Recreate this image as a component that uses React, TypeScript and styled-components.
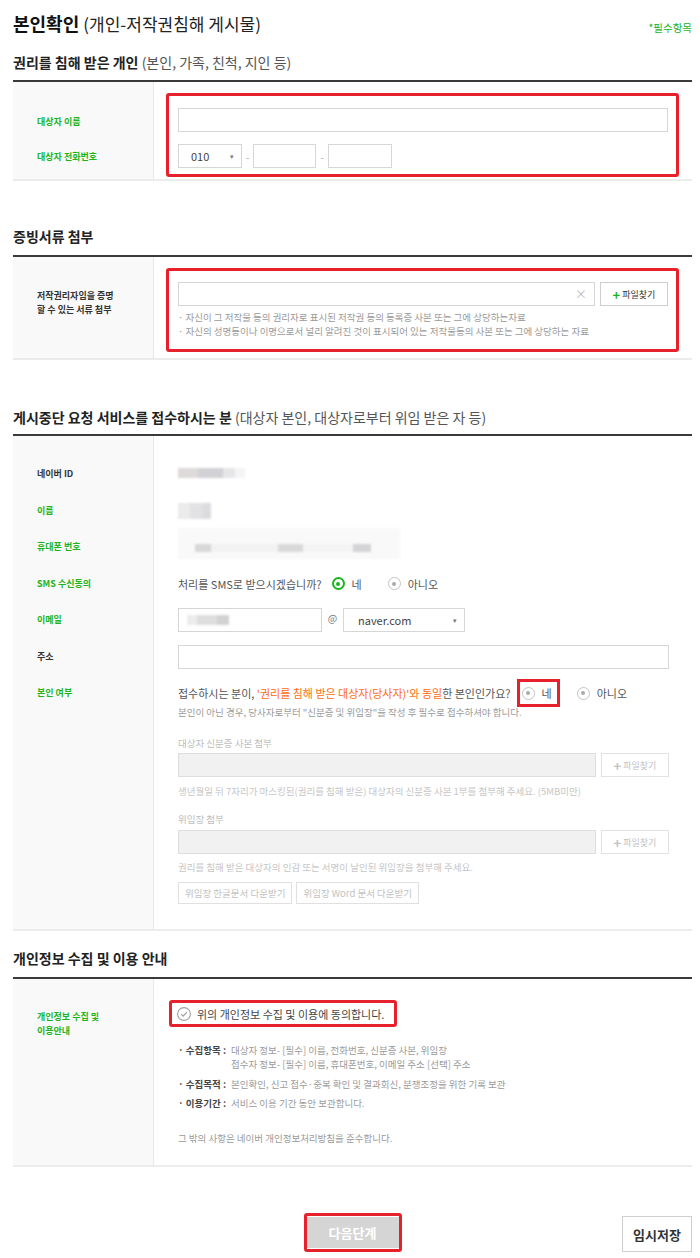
import React from "react";
import styled, { createGlobalStyle } from "styled-components";

const GREEN = "#1db41d";
const RED = "#e8202b";

const GlobalStyle = createGlobalStyle`
  html, body { margin: 0; padding: 0; background: #fff; }
  body {
    font-family: "Noto Sans CJK KR", "Noto Sans", sans-serif;
    color: #333;
  }
  * { box-sizing: border-box; }
`;

const App = () => {
  return (
    <Page>
      <GlobalStyle />
      <TitleRow>
        <Title>
          본인확인 <span>(개인-저작권침해 게시물)</span>
        </Title>
        <Required>*필수항목</Required>
      </TitleRow>

      {/* 권리를 침해 받은 개인 */}
      <Heading $mt={19} $mb={9}>
        권리를 침해 받은 개인 <span>(본인, 가족, 친척, 지인 등)</span>
      </Heading>
      <Table $pt={0} $pb={2}>
        <Row>
          <LabelStack>
            <Label $green>대상자 이름</Label>
            <Label $green>대상자 전화번호</Label>
          </LabelStack>
          <Highlight $pad="12px 8px 6px 9px">
            <InputBox />
            <PhoneRow>
              <Select $w={64}>
                010 <Arrow>▾</Arrow>
              </Select>
              <Dash>-</Dash>
              <InputBox $w={63} />
              <Dash>-</Dash>
              <InputBox $w={64} />
            </PhoneRow>
          </Highlight>
        </Row>
      </Table>

      {/* 증빙서류 첨부 */}
      <Heading $mt={46} $mb={10}>
        증빙서류 첨부
      </Heading>
      <Table $pt={0} $pb={6}>
        <Row>
          <Label $lh={14} $top={32}>
            저작권리자임을 증명
            <br />할 수 있는 서류 첨부
          </Label>
          <Highlight $pad="11px 8px 11px 9px">
            <FileRow>
              <InputBox $grow>
                <Clear>×</Clear>
              </InputBox>
              <FileBtn>
                <b>+</b>파일찾기
              </FileBtn>
            </FileRow>
            <Note $mt={4}>· 자신이 그 저작물 등의 권리자로 표시된 저작권 등의 등록증 사본 또는 그에 상당하는자료</Note>
            <Note>· 자신의 성명등이나 이명으로서 널리 알려진 것이 표시되어 있는 저작물등의 사본 또는 그에 상당하는 자료</Note>
          </Highlight>
        </Row>
      </Table>

      {/* 게시중단 요청 서비스를 접수하시는 분 */}
      <Heading $mt={48} $mb={8}>
        게시중단 요청 서비스를 접수하시는 분 <span>(대상자 본인, 대상자로부터 위임 받은 자 등)</span>
      </Heading>
      <Table $pt={26} $pb={25}>
        <Row $gap>
          <Label>네이버 ID</Label>
          <Field>
            <Blur
              $w={67}
              $h={23}
              $bg="linear-gradient(#fff 0 6px, transparent 6px 16px, #fff 16px), linear-gradient(90deg, #dedada 0 20px, #d2d2d6 20px 45px, #e6e6e9 45px 57px, #f4f4f4 57px)"
            />
          </Field>
        </Row>
        <Row $gap>
          <Label $green>이름</Label>
          <Field>
            <Blur
              $w={33}
              $h={16}
              $mt={4}
              $bg="linear-gradient(90deg, #ebebeb 0 12px, #e2e2e4 12px 25px, #dcdce0 25px)"
            />
          </Field>
        </Row>
        <Row $gap>
          <Label $green>휴대폰 번호</Label>
          <Field>
            <Blur
              $w={222}
              $h={31}
              $mt={-7}
              $bg="linear-gradient(#f9f9f9 0 16px, transparent 16px 24px, #f9f9f9 24px), linear-gradient(90deg, #f9f9f9 0 17px, #d8d8d8 17px 33px, #f2f2f2 33px 100px, #d9d9d9 100px 125px, #f4f4f4 125px 175px, #d4d4d7 175px 193px, #f9f9f9 193px)"
            />
          </Field>
        </Row>
        <Row $gap>
          <Label $green>SMS 수신동의</Label>
          <Field>
            <Line>
              처리를 SMS로 받으시겠습니까?
              <Option $ml={10}>
                <Radio $on />네
              </Option>
              <Option $ml={26}>
                <Radio />
                아니오
              </Option>
            </Line>
          </Field>
        </Row>
        <Row $gap>
          <Label $green>이메일</Label>
          <Field>
            <EmailRow>
              <InputBox $w={144}>
                <Blur
                  $w={42}
                  $h={10}
                  $ml={8}
                  $bg="linear-gradient(90deg, #ececec 0 10px, #dedede 10px 30px, #d2d2d4 30px)"
                />
              </InputBox>
              <At>@</At>
              <Select $w={122} $pl={14}>
                naver.com <Arrow>▾</Arrow>
              </Select>
            </EmailRow>
          </Field>
        </Row>
        <Row $gap>
          <Label>주소</Label>
          <Field>
            <InputBox />
          </Field>
        </Row>
        <Row $gap>
          <Label $green>본인 여부</Label>
          <Field>
            <Line>
              접수하시는 분이,&nbsp;<Orange>'권리를 침해 받은 대상자(당사자)'와 동일</Orange>한 본인인가요?
              <Option $ml={6} $boxed>
                <Radio />네
              </Option>
              <Option $ml={17}>
                <Radio />
                아니오
              </Option>
            </Line>
            <Note>본인이 아닌 경우, 당사자로부터 "신분증 및 위임장"을 작성 후 필수로 접수하셔야 합니다.</Note>

            <SubLabel $mt={17}>대상자 신분증 사본 첨부</SubLabel>
            <FileRow $mt={3}>
              <InputBox $grow $disabled />
              <FileBtn $disabled>
                <b>+</b>파일찾기
              </FileBtn>
            </FileRow>
            <Note $mt={7} $faded>
              생년월일 뒤 7자리가 마스킹된(권리를 침해 받은) 대상자의 신분증 사본 1부를 첨부해 주세요. (5MB미만)
            </Note>

            <SubLabel $mt={14}>위임장 첨부</SubLabel>
            <FileRow $mt={4}>
              <InputBox $grow $disabled />
              <FileBtn $disabled>
                <b>+</b>파일찾기
              </FileBtn>
            </FileRow>
            <Note $mt={6} $faded>
              권리를 침해 받은 대상자의 인감 또는 서명이 날인된 위임장을 첨부해 주세요.
            </Note>
            <DownRow>
              <DownBtn>위임장 한글문서 다운받기</DownBtn>
              <DownBtn>위임장 Word 문서 다운받기</DownBtn>
            </DownRow>
          </Field>
        </Row>
      </Table>

      {/* 개인정보 수집 및 이용 안내 */}
      <Heading $mt={18} $mb={10}>
        개인정보 수집 및 이용 안내
      </Heading>
      <Table $pt={0} $pb={20}>
        <Row>
          <Label $green $lh={14} $top={31}>
            개인정보 수집 및
            <br />
            이용안내
          </Label>
          <div>
            <Agree>
              <svg width="14" height="14" viewBox="0 0 14 14">
                <circle cx="7" cy="7" r="6.4" fill="none" stroke="#a3a3a3" strokeWidth="1.1" />
                <path d="M4.1 7.1 L6.1 9.1 L9.9 5.1" fill="none" stroke="#a3a3a3" strokeWidth="1.3" />
              </svg>
              위의 개인정보 수집 및 이용에 동의합니다.
            </Agree>
            <InfoList>
              <InfoItem>
                <Term>· 수집항목 :</Term>
                <span>
                  대상자 정보- [필수] 이름, 전화번호, 신분증 사본, 위임장
                  <br />
                  접수자 정보- [필수] 이름, 휴대폰번호, 이메일 주소 [선택] 주소
                </span>
              </InfoItem>
              <InfoItem $mt={6}>
                <Term>· 수집목적 :</Term>
                <span>본인확인, 신고 접수·중복 확인 및 결과회신, 분쟁조정을 위한 기록 보관</span>
              </InfoItem>
              <InfoItem $mt={5}>
                <Term>· 이용기간 :</Term>
                <span>서비스 이용 기간 동안 보관합니다.</span>
              </InfoItem>
              <Etc>그 밖의 사항은 네이버 개인정보처리방침을 준수합니다.</Etc>
            </InfoList>
          </div>
        </Row>
      </Table>

      <Footer>
        <span />
        <NextWrap>
          <NextBtn>다음단계</NextBtn>
        </NextWrap>
        <SaveBtn>임시저장</SaveBtn>
      </Footer>
    </Page>
  );
};

export default App;

const Page = styled.div`
  width: 700px;
  padding: 13px 8px 6px 13px;
`;

const TitleRow = styled.div`
  display: flex;
  justify-content: space-between;
  align-items: flex-end;
`;

const Title = styled.h1`
  margin: 0;
  font-size: 18px;
  line-height: 20px;
  font-weight: 700;
  color: #111;
  span {
    font-size: 17px;
    font-weight: 400;
    color: #222;
  }
`;

const Required = styled.div`
  font-size: 10.5px;
  line-height: 14px;
  color: ${GREEN};
  margin-bottom: -1px;
`;

const Heading = styled.h2<{ $mt: number; $mb: number }>`
  margin: ${(p) => p.$mt}px 0 0;
  padding-bottom: ${(p) => p.$mb}px;
  font-size: 14px;
  line-height: 18px;
  font-weight: 700;
  color: #222;
  border-bottom: 2px solid #3a3a3a;
  span {
    font-weight: 400;
    color: #555;
  }
`;

const Table = styled.div<{ $pt: number; $pb: number }>`
  padding: ${(p) => p.$pt}px 0 ${(p) => p.$pb}px;
  border-bottom: 2px solid #ececec;
  background: linear-gradient(90deg, #f9f9f9 0 140px, #e8e8e8 140px 141px, #fff 141px);
`;

const Row = styled.div<{ $gap?: boolean }>`
  display: grid;
  grid-template-columns: 141px 1fr;
  align-items: start;
  & + & {
    margin-top: ${(p) => (p.$gap ? 12.5 : 0)}px;
  }
`;

const LabelStack = styled.div`
  display: flex;
  flex-direction: column;
  gap: 11px;
  padding-top: 28px;
`;

const Label = styled.div<{ $green?: boolean; $lh?: number; $top?: number }>`
  padding: ${(p) => p.$top ?? 0}px 0 0 24px;
  font-size: 9px;
  font-weight: 700;
  line-height: ${(p) => p.$lh ?? 24}px;
  color: ${(p) => (p.$green ? GREEN : "#333")};
  white-space: nowrap;
`;

const Highlight = styled.div<{ $pad: string }>`
  margin: 11px 13px 0 12px;
  padding: ${(p) => p.$pad};
  border: 3px solid ${RED};
  border-radius: 3px;
`;

const Field = styled.div`
  padding: 0 23px 0 24px;
`;

const InputBox = styled.div<{ $w?: number; $grow?: boolean; $disabled?: boolean }>`
  display: flex;
  align-items: center;
  height: 24px;
  width: ${(p) => (p.$w ? `${p.$w}px` : "100%")};
  flex: ${(p) => (p.$grow ? 1 : "none")};
  border: 1px solid ${(p) => (p.$disabled ? "#dedede" : "#d6d6d6")};
  background: ${(p) => (p.$disabled ? "#f1f1f1" : "#fff")};
`;

const PhoneRow = styled.div`
  display: flex;
  align-items: center;
  gap: 4px;
  margin-top: 12px;
`;

const Dash = styled.span`
  font-size: 10px;
  color: #aaa;
`;

const Select = styled.div<{ $w: number; $pl?: number }>`
  display: flex;
  align-items: center;
  justify-content: space-between;
  width: ${(p) => p.$w}px;
  height: 24px;
  padding: 0 7px 0 ${(p) => p.$pl ?? 12}px;
  border: 1px solid #d6d6d6;
  font-size: 11px;
  color: #444;
`;

const Arrow = styled.span`
  font-size: 7px;
  color: #777;
`;

const FileRow = styled.div<{ $mt?: number }>`
  display: flex;
  gap: 5px;
  margin-top: ${(p) => p.$mt ?? 0}px;
`;

const Clear = styled.span`
  margin-left: auto;
  margin-right: 7px;
  font-size: 12px;
  line-height: 1;
  color: #bbb;
`;

const FileBtn = styled.div<{ $disabled?: boolean }>`
  display: flex;
  align-items: center;
  justify-content: center;
  gap: 2px;
  width: 68px;
  height: 24px;
  border: 1px solid ${(p) => (p.$disabled ? "#e2e2e2" : "#cfcfcf")};
  font-size: 9px;
  color: ${(p) => (p.$disabled ? "#c2c2c2" : "#333")};
  b {
    font-size: 13px;
    line-height: 1;
    color: ${(p) => (p.$disabled ? "#c2c2c2" : GREEN)};
  }
`;

const Note = styled.div<{ $mt?: number; $faded?: boolean }>`
  margin-top: ${(p) => p.$mt ?? 0}px;
  font-size: 9.5px;
  line-height: 14px;
  color: ${(p) => (p.$faded ? "#c6c6c6" : "#9a9a9a")};
  white-space: nowrap;
`;

const Blur = styled.div<{ $w: number; $h: number; $bg: string; $mt?: number; $ml?: number }>`
  width: ${(p) => p.$w}px;
  height: ${(p) => p.$h}px;
  margin: ${(p) => p.$mt ?? 0}px 0 0 ${(p) => p.$ml ?? 0}px;
  background: ${(p) => p.$bg};
  filter: blur(1px);
`;

const Line = styled.div`
  display: flex;
  align-items: center;
  height: 24px;
  font-size: 11px;
  color: #555;
  white-space: nowrap;
`;

const Orange = styled.span`
  color: #ff6b0f;
`;

const Option = styled.span<{ $ml: number; $boxed?: boolean }>`
  display: inline-flex;
  align-items: center;
  gap: 7px;
  margin-left: ${(p) => p.$ml}px;
  ${(p) =>
    p.$boxed &&
    `
    height: 28px;
    margin-top: -2px;
    margin-bottom: -2px;
    padding: 0 5px 0 2px;
    border: 3px solid ${RED};
  `}
`;

const Radio = styled.span<{ $on?: boolean }>`
  display: inline-flex;
  align-items: center;
  justify-content: center;
  flex-shrink: 0;
  width: 13px;
  height: 13px;
  border-radius: 50%;
  border: ${(p) => (p.$on ? `2px solid ${GREEN}` : "1px solid #c4c4c4")};
  &::after {
    content: "";
    width: 4px;
    height: 4px;
    border-radius: 50%;
    background: ${(p) => (p.$on ? GREEN : "#aaa")};
  }
`;

const EmailRow = styled.div`
  display: flex;
  align-items: center;
`;

const At = styled.span`
  width: 21px;
  text-align: center;
  font-size: 10px;
  color: #777;
  margin-top: -6px;
`;

const SubLabel = styled.div<{ $mt: number }>`
  margin-top: ${(p) => p.$mt}px;
  font-size: 9.5px;
  line-height: 14px;
  color: #bdbdbd;
`;

const DownRow = styled.div`
  display: flex;
  gap: 4px;
  margin-top: 8px;
`;

const DownBtn = styled.div`
  display: flex;
  align-items: center;
  height: 22px;
  padding: 0 6px;
  border: 1px solid #e0e0e0;
  font-size: 9.5px;
  color: #c2c2c2;
`;

const Agree = styled.div`
  display: inline-flex;
  align-items: center;
  gap: 6px;
  height: 27px;
  margin: 21px 0 0 15px;
  padding: 0 10px 0 5px;
  border: 3px solid ${RED};
  border-radius: 3px;
  font-size: 11px;
  color: #444;
`;

const InfoList = styled.div`
  margin-top: 16px;
  padding-left: 24px;
`;

const InfoItem = styled.div<{ $mt?: number }>`
  display: grid;
  grid-template-columns: 53px 1fr;
  margin-top: ${(p) => p.$mt ?? 0}px;
  font-size: 9.5px;
  line-height: 14px;
  color: #9a9a9a;
  white-space: nowrap;
`;

const Term = styled.span`
  font-weight: 700;
  color: #444;
`;

const Etc = styled.div`
  margin-top: 21px;
  font-size: 9.5px;
  line-height: 14px;
  color: #9a9a9a;
`;

const Footer = styled.div`
  display: grid;
  grid-template-columns: 1fr auto 1fr;
  align-items: end;
  margin-top: 46px;
`;

const NextWrap = styled.div`
  padding: 1px 0;
  border: 3px solid ${RED};
  border-radius: 3px;
`;

const NextBtn = styled.div`
  display: flex;
  align-items: center;
  justify-content: center;
  width: 92px;
  height: 31px;
  background: #d5d5d5;
  font-size: 13px;
  font-weight: 700;
  color: #fff;
`;

const SaveBtn = styled.div`
  justify-self: end;
  display: flex;
  align-items: center;
  justify-content: center;
  width: 70px;
  height: 36px;
  border: 1px solid #cfcfcf;
  font-size: 13px;
  font-weight: 700;
  color: #333;
`;
